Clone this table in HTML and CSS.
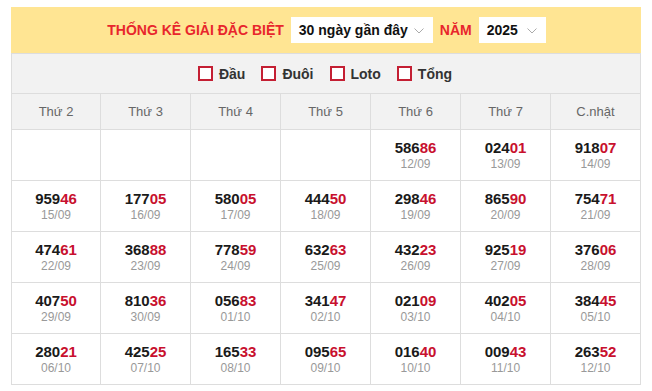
FILE: index.html
```html
<!DOCTYPE html>
<html lang="vi">
<head>
<meta charset="utf-8">
<title>Thống kê giải đặc biệt</title>
<link rel="stylesheet" href="styles.css">
</head>
<body>
<div class="page">
  <div class="box">
    <div class="filter">
      <span class="title">THỐNG KÊ GIẢI ĐẶC BIỆT</span>
      <div class="select sel-days"><span>30 ngày gần đây</span><svg class="chev" viewBox="0 0 10 6" width="10" height="6"><polyline points="0.5,0.5 5,5 9.5,0.5" fill="none" stroke="#aaa" stroke-width="1"/></svg></div>
      <span class="title">NĂM</span>
      <div class="select sel-year"><span>2025</span><svg class="chev" viewBox="0 0 10 6" width="10" height="6"><polyline points="0.5,0.5 5,5 9.5,0.5" fill="none" stroke="#aaa" stroke-width="1"/></svg></div>
    </div>
    <div class="checks">
      <label class="check"><span class="cb"></span>Đầu</label>
      <label class="check"><span class="cb"></span>Đuôi</label>
      <label class="check"><span class="cb"></span>Loto</label>
      <label class="check"><span class="cb"></span>Tổng</label>
    </div>
    <table class="cal">
      <colgroup><col class="c1"><col><col><col><col><col><col></colgroup>
      <thead>
        <tr><th>Thứ 2</th><th>Thứ 3</th><th>Thứ 4</th><th>Thứ 5</th><th>Thứ 6</th><th>Thứ 7</th><th>C.nhật</th></tr>
      </thead>
      <tbody>
        <tr>
          <td></td><td></td><td></td><td></td>
          <td><div class="num">586<b>86</b></div><div class="date">12/09</div></td>
          <td><div class="num">024<b>01</b></div><div class="date">13/09</div></td>
          <td><div class="num">918<b>07</b></div><div class="date">14/09</div></td>
        </tr>
        <tr>
          <td><div class="num">959<b>46</b></div><div class="date">15/09</div></td>
          <td><div class="num">177<b>05</b></div><div class="date">16/09</div></td>
          <td><div class="num">580<b>05</b></div><div class="date">17/09</div></td>
          <td><div class="num">444<b>50</b></div><div class="date">18/09</div></td>
          <td><div class="num">298<b>46</b></div><div class="date">19/09</div></td>
          <td><div class="num">865<b>90</b></div><div class="date">20/09</div></td>
          <td><div class="num">754<b>71</b></div><div class="date">21/09</div></td>
        </tr>
        <tr>
          <td><div class="num">474<b>61</b></div><div class="date">22/09</div></td>
          <td><div class="num">368<b>88</b></div><div class="date">23/09</div></td>
          <td><div class="num">778<b>59</b></div><div class="date">24/09</div></td>
          <td><div class="num">632<b>63</b></div><div class="date">25/09</div></td>
          <td><div class="num">432<b>23</b></div><div class="date">26/09</div></td>
          <td><div class="num">925<b>19</b></div><div class="date">27/09</div></td>
          <td><div class="num">376<b>06</b></div><div class="date">28/09</div></td>
        </tr>
        <tr>
          <td><div class="num">407<b>50</b></div><div class="date">29/09</div></td>
          <td><div class="num">810<b>36</b></div><div class="date">30/09</div></td>
          <td><div class="num">056<b>83</b></div><div class="date">01/10</div></td>
          <td><div class="num">341<b>47</b></div><div class="date">02/10</div></td>
          <td><div class="num">021<b>09</b></div><div class="date">03/10</div></td>
          <td><div class="num">402<b>05</b></div><div class="date">04/10</div></td>
          <td><div class="num">384<b>45</b></div><div class="date">05/10</div></td>
        </tr>
        <tr>
          <td><div class="num">280<b>21</b></div><div class="date">06/10</div></td>
          <td><div class="num">425<b>25</b></div><div class="date">07/10</div></td>
          <td><div class="num">165<b>33</b></div><div class="date">08/10</div></td>
          <td><div class="num">095<b>65</b></div><div class="date">09/10</div></td>
          <td><div class="num">016<b>40</b></div><div class="date">10/10</div></td>
          <td><div class="num">009<b>43</b></div><div class="date">11/10</div></td>
          <td><div class="num">263<b>52</b></div><div class="date">12/10</div></td>
        </tr>
      </tbody>
    </table>
  </div>
</div>
</body>
</html>
```

FILE: styles.css
```css
* { box-sizing: border-box; }
html, body { margin: 0; padding: 0; background: #fff; }
body { font-family: "Liberation Sans", Arial, sans-serif; color: #222; }
.page { padding: 7px 11px; }
.box { width: 630px; }
.filter {
  height: 46px;
  background: #ffe593;
  display: flex;
  align-items: center;
  justify-content: center;
  gap: 7px;
  padding-left: 1px;
}
.title { color: #e8262c; font-weight: bold; font-size: 14px; }
.select {
  height: 26px;
  background: #fff;
  display: flex;
  align-items: center;
  justify-content: space-between;
  padding: 0 9px 0 8px;
  font-size: 14px;
  font-weight: bold;
  color: #111;
}
.sel-days { width: 142px; }
.sel-year { width: 67px; }
.chev { display: block; margin-top: 1px; }
.checks {
  height: 40px;
  background: #f2f2f2;
  border: 1px solid #ddd;
  border-bottom: none;
  display: flex;
  align-items: center;
  justify-content: center;
  gap: 16px;
  padding-right: 2px;
}
.check {
  display: flex;
  align-items: center;
  gap: 6px;
  font-size: 14px;
  font-weight: bold;
  color: #333;
}
.cb {
  width: 15px;
  height: 15px;
  border: 2px solid #c41f33;
  background: #fff;
  display: block;
}
.cal {
  width: 630px;
  border-collapse: collapse;
  table-layout: fixed;
}
.cal col { width: 90px; }
.cal col.c1 { width: 89px; }
.cal th, .cal td {
  border: 1px solid #ddd;
  text-align: center;
  padding: 0;
}
.cal th {
  height: 36px;
  background: #f2f2f2;
  font-weight: normal;
  font-size: 13px;
  color: #666;
}
.cal td { height: 51px; background: #fff; }
.num { font-size: 15px; font-weight: bold; color: #1a1a1a; line-height: 17px; }
.num b { color: #c8102e; }
.date { font-size: 12px; color: #999; line-height: 15px; margin-top: 1px; }
```
